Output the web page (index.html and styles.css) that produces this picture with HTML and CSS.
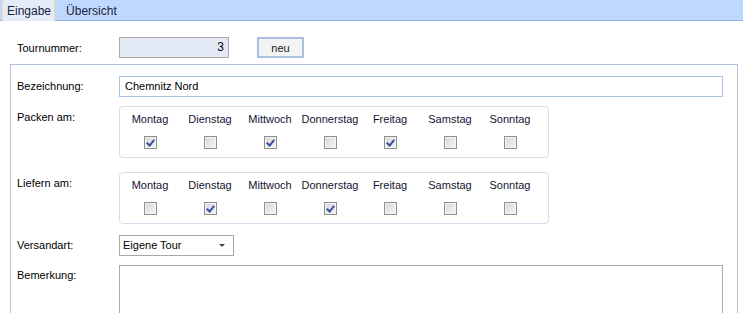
FILE: index.html
```html
<!DOCTYPE html>
<html lang="de">
<head>
  <meta charset="UTF-8">
  <link rel="stylesheet" href="styles.css">
  <title>Tour</title>
</head>
<body>
  <div class="tabs">
    <div class="tab active">Eingabe</div>
    <div class="tab">Übersicht</div>
  </div>

  <div class="page">
    <div class="top-row">
      <span class="label">Tournummer:</span>
      <div class="field number">3</div>
      <button class="btn">neu</button>
    </div>

    <div class="group">
      <div class="row">
        <span class="label">Bezeichnung:</span>
        <div class="field text">Chemnitz Nord</div>
      </div>

      <div class="row days-row">
        <span class="label">Packen am:</span>
        <div class="days">
          <div class="day"><span>Montag</span><i class="cb on"></i></div>
          <div class="day"><span>Dienstag</span><i class="cb"></i></div>
          <div class="day"><span>Mittwoch</span><i class="cb on"></i></div>
          <div class="day"><span>Donnerstag</span><i class="cb"></i></div>
          <div class="day"><span>Freitag</span><i class="cb on"></i></div>
          <div class="day"><span>Samstag</span><i class="cb"></i></div>
          <div class="day"><span>Sonntag</span><i class="cb"></i></div>
        </div>
      </div>

      <div class="row days-row last">
        <span class="label">Liefern am:</span>
        <div class="days">
          <div class="day"><span>Montag</span><i class="cb"></i></div>
          <div class="day"><span>Dienstag</span><i class="cb on"></i></div>
          <div class="day"><span>Mittwoch</span><i class="cb"></i></div>
          <div class="day"><span>Donnerstag</span><i class="cb on"></i></div>
          <div class="day"><span>Freitag</span><i class="cb"></i></div>
          <div class="day"><span>Samstag</span><i class="cb"></i></div>
          <div class="day"><span>Sonntag</span><i class="cb"></i></div>
        </div>
      </div>

      <div class="row">
        <span class="label">Versandart:</span>
        <div class="field select">Eigene Tour<b class="arrow"></b></div>
      </div>

      <div class="row">
        <span class="label">Bemerkung:</span>
        <div class="field memo"></div>
      </div>
    </div>
  </div>
</body>
</html>
```

FILE: styles.css
```css
html, body {
  height: 313px;
  overflow: hidden;
}

body {
  margin: 0;
  font-family: "Liberation Sans", Arial, sans-serif;
  font-size: 11px;
  color: #000;
  background-color: #fff;
}

/* tab strip */
.tabs {
  display: flex;
  height: 20px;
  padding-left: 2px;
  background-color: #bed9fd;
  border-bottom: 1px solid #91b2e2;
}

.tab {
  padding: 4px 4px 0 5px;
  font-size: 12px;
  color: #1c1c44;
}

.tab.active {
  background-color: #e4ecf8;
  border-left: 1px solid #f2dc9c;
  border-right: 1px solid #f2dc9c;
  margin-bottom: -1px;
  padding: 4px 3px 0 4px;
  margin-right: 6px;
}

.page {
  padding: 16px 5px 0 10px;
}

.label {
  display: inline-block;
  width: 109px;
  padding-left: 7px;
  box-sizing: border-box;
  flex-shrink: 0;
}

.top-row {
  display: flex;
  align-items: center;
  height: 21px;
  margin-bottom: 6px;
}

.top-row .label {
  padding-top: 1px;
}

.field {
  box-sizing: border-box;
  height: 21px;
  line-height: 19px;
  border: 1px solid #a8a8a8;
  padding: 0 5px;
  background-color: #fff;
}

.field.number {
  width: 110px;
  text-align: right;
  background-color: #e3eaf6;
  padding-right: 4px;
  font-size: 12px;
}

.btn {
  margin-left: 28px;
  width: 47px;
  height: 21px;
  border: 2px solid #a9c0e2;
  background-color: #f3f3f3;
  font-family: inherit;
  font-size: 11px;
  color: #222;
  padding: 0;
}

/* group frame */
.group {
  border: 1px solid #b3c5dd;
  border-bottom: none;
  height: 260px;
  padding: 11px 14px 0 0;
}

.group .label {
  width: 108px;
  padding-left: 6px;
}

.row {
  display: flex;
  align-items: flex-start;
  margin-bottom: 9px;
}

.row .label {
  padding-top: 4px;
}

.field.text {
  flex: 1;
  border-color: #a9c4e8;
  padding-left: 5px;
}

.days-row {
  margin-bottom: 14px;
}

.days-row.last {
  margin-bottom: 11px;
}

.days-row .label {
  padding-top: 5px;
}

.days {
  display: flex;
  padding: 5px 8px 8px 0;
  border: 1px solid #d3deec;
  border-radius: 4px;
}

.day {
  width: 60px;
  display: flex;
  flex-direction: column;
  align-items: center;
}

.day span {
  line-height: 14px;
  color: #141432;
}

.cb {
  display: block;
  position: relative;
  width: 13px;
  height: 13px;
  margin-top: 10px;
  box-sizing: border-box;
  border: 1px solid #8e8f8f;
  background: linear-gradient(135deg, #d6d6d6, #f6f6f6);
  box-shadow: inset 0 0 0 1px #f4f4f4;
}

.cb.on::after {
  content: "";
  position: absolute;
  left: 3px;
  top: 1px;
  width: 3px;
  height: 6px;
  border-right: 2px solid #3b4fa8;
  border-bottom: 2px solid #3b4fa8;
  transform: rotate(40deg);
}

.field.select {
  position: relative;
  width: 115px;
  padding-left: 3px;
}

.arrow {
  position: absolute;
  right: 8px;
  top: 8px;
  border-left: 3px solid transparent;
  border-right: 3px solid transparent;
  border-top: 3px solid #444;
}

.field.memo {
  flex: 1;
  height: 80px;
}
```
